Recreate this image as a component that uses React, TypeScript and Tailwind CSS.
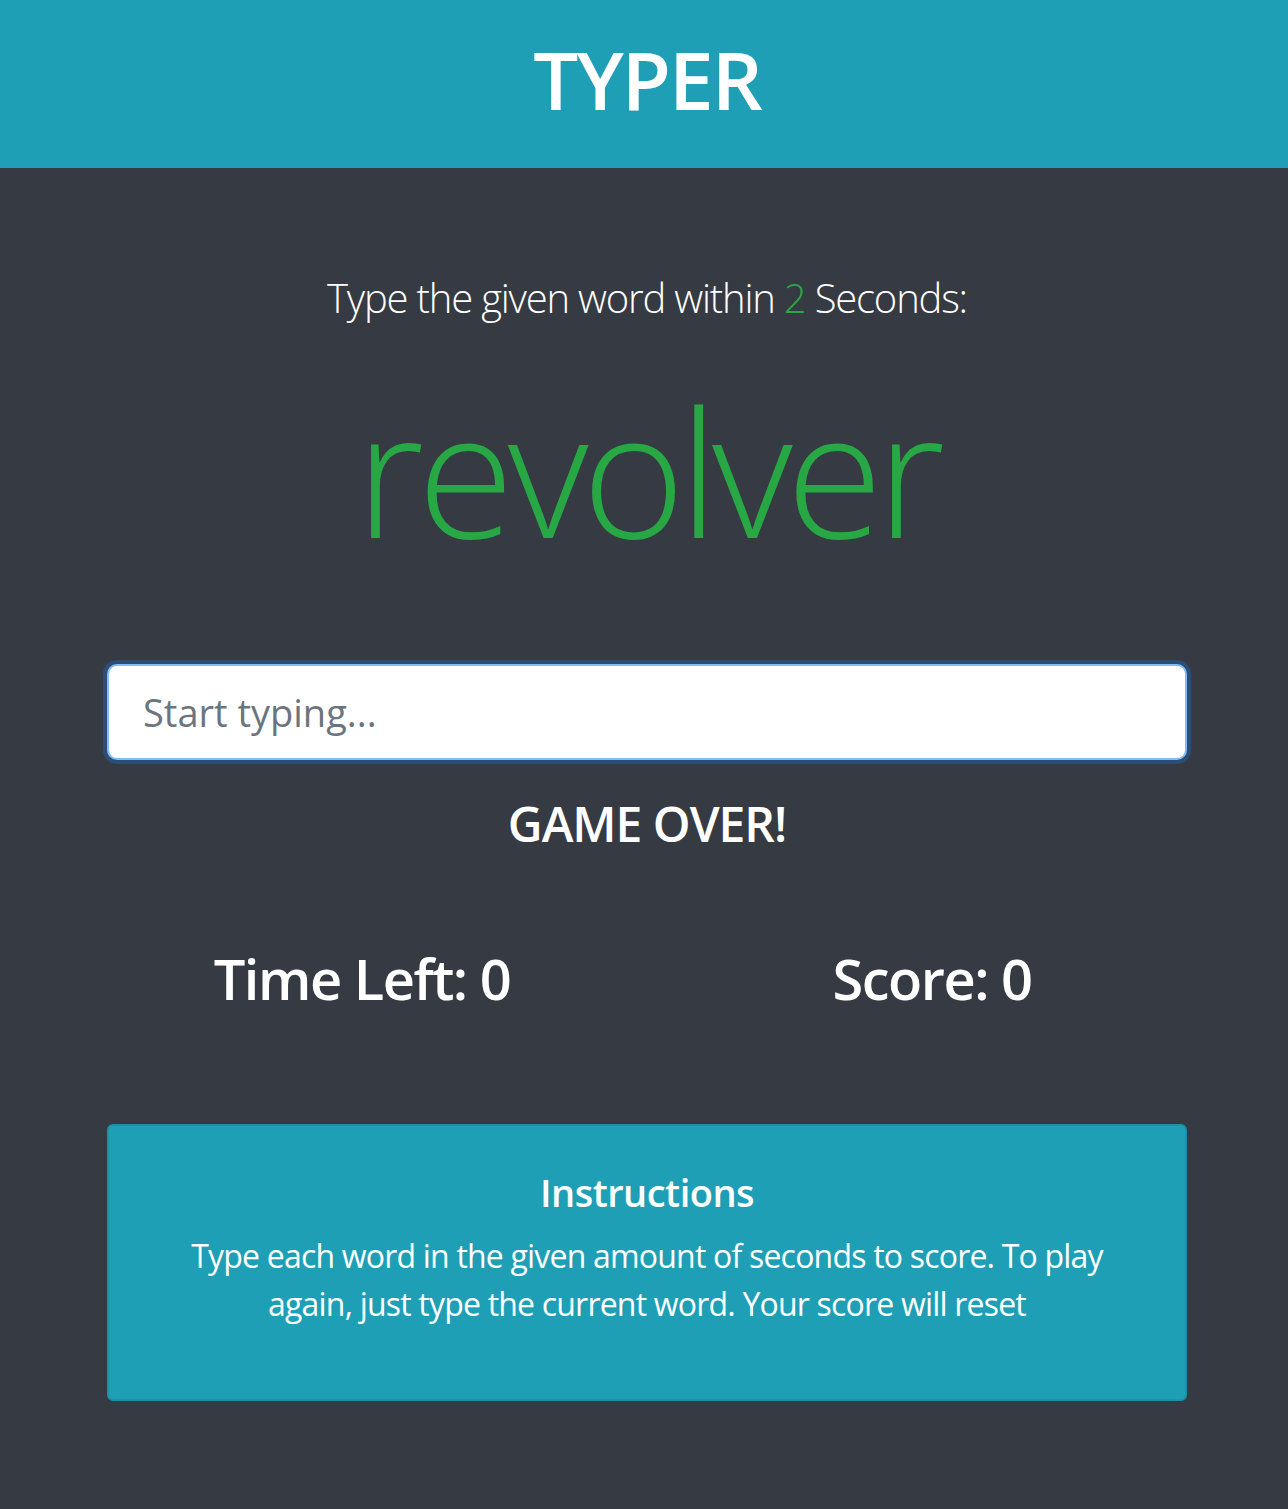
export default function App() {
  return (
    <div className="min-h-[1509px] bg-[#363a42] font-['Open_Sans',sans-serif] text-white">
      <header className="flex h-[168px] items-center justify-center bg-[#1e9fb5] pb-[10px] pl-[6px]">
        <h1 className="text-[80px] font-semibold leading-none tracking-[-2px]">TYPER</h1>
      </header>

      <main className="mx-auto w-[1080px] translate-x-[3px] text-center">
        <p className="pt-[106px] text-[40px] font-light leading-[48px] tracking-[-1.2px]">
          Type the given word within <span className="text-[#28a745]">2</span> Seconds:
        </p>

        <h2 className="mt-[48px] text-[176px] font-light leading-[200px] tracking-[-6.5px] text-[#28a745]">
          revolver
        </h2>

        <input
          type="text"
          placeholder="Start typing..."
          className="mt-[94px] block h-[96px] w-full rounded-[10px] border-2 border-[#80bdff] bg-white px-[34px] text-[38px] text-[#495057] shadow-[0_0_0_4px_#2d4d75] outline-none placeholder:text-[#6c757d]"
        />

        <h3 className="mt-[36px] text-[48px] font-semibold leading-[56px] tracking-[-1px]">GAME OVER!</h3>

        <div className="mt-[94px] -mx-[30px] grid grid-cols-2">
          <h3 className="text-[56px] font-semibold leading-[64px] tracking-[-1.5px]">Time Left: 0</h3>
          <h3 className="text-[56px] font-semibold leading-[64px] tracking-[-1.5px]">Score: 0</h3>
        </div>

        <div className="mt-[114px] h-[277px] rounded-[6px] border-2 border-[#1a93a8] bg-[#1e9fb5] px-[72px] pt-[42px]">
          <h5 className="text-[38px] font-semibold leading-[48px] tracking-[-0.5px]">Instructions</h5>
          <p className="mt-[16px] text-[32px] leading-[48px] tracking-[-0.8px]">
            Type each word in the given amount of seconds to score. To play again, just type the current word. Your score will reset
          </p>
        </div>
      </main>
    </div>
  )
}
